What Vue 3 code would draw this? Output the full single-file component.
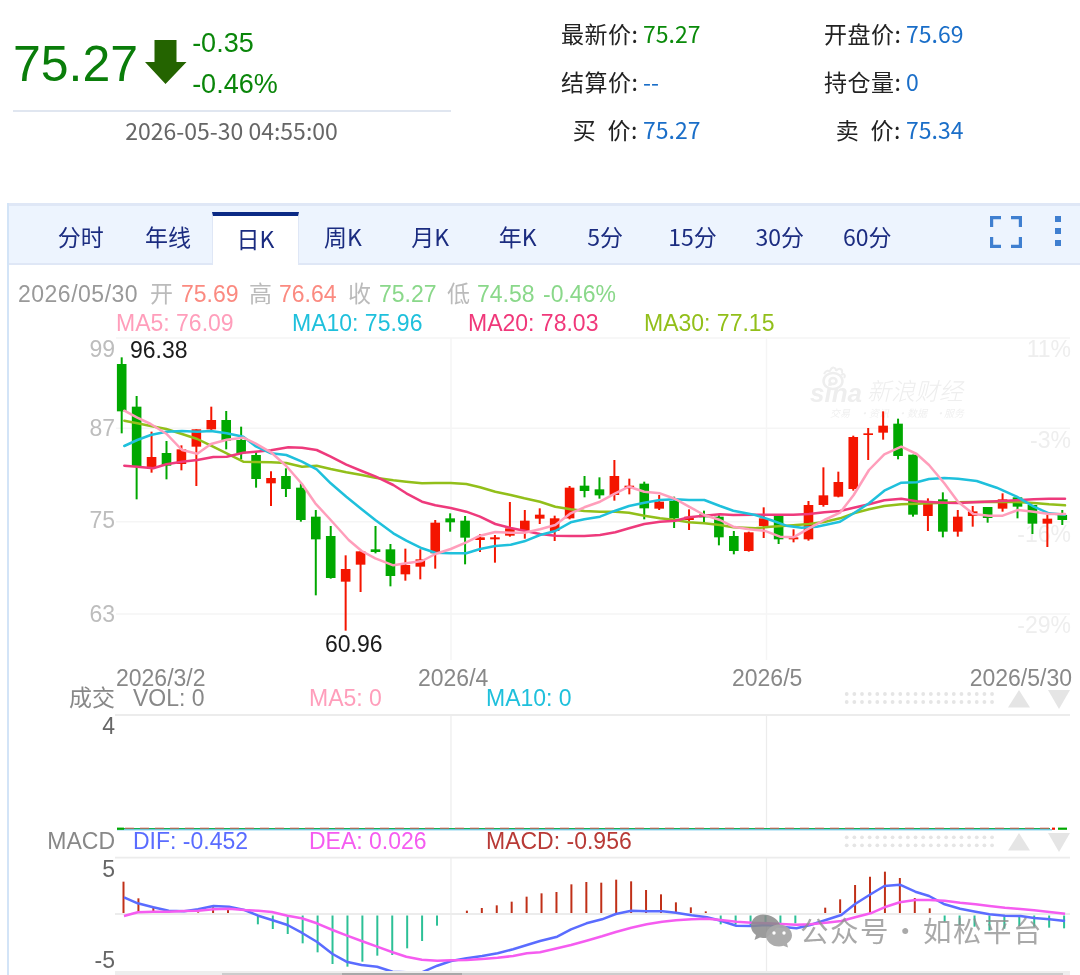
<script setup>
const tabs = ['分时', '年线', '日K', '周K', '月K', '年K', '5分', '15分', '30分', '60分']

const statRows = [
  [
    { label: '最新价:', value: '75.27', tone: 'down' },
    { label: '开盘价:', value: '75.69', tone: 'info' }
  ],
  [
    { label: '结算价:', value: '--', tone: 'info' },
    { label: '持仓量:', value: '0', tone: 'info' }
  ],
  [
    { label: '买\u00a0\u00a0价:', value: '75.27', tone: 'info' },
    { label: '卖\u00a0\u00a0价:', value: '75.34', tone: 'info' }
  ]
]

// [high, top, bottom, low, colour]; measured in 3x crop units, grouped by crop
const rawCandles = [
  [52, 72, 214, 280, 'g'], [168, 200, 378, 478, 'g'], [275, 351, 382, 398, 'r'], [303, 339, 377, 418, 'g'],
  [316, 328, 372, 391, 'r'], [268, 268, 320, 438, 'r'], [200, 240, 268, 272, 'r'], [213, 240, 302, 328, 'g'],
  [260, 300, 340, 358, 'g'], [335, 345, 417, 443, 'g'], [394, 414, 430, 498, 'r'], [385, 408, 447, 471, 'g'],
  [430, 443, 540, 545, 'g'], [510, 530, 598, 766, 'g'], [558, 588, 714, 716, 'g'], [646, 687, 725, 872, 'r'],
  [634, 634, 674, 756, 'r'], [558, 628, 636, 640, 'g'], [612, 628, 708, 739, 'g'], [626, 675, 703, 722, 'r'],
  [628, 658, 680, 718, 'r'], [540, 548, 640, 686, 'r']
].map((c) => [c, 340])
  .concat([
    [340, 355, 367, 395, 'g'], [348, 362, 413, 493, 'g'], [402, 412, 420, 456, 'r'], [405, 412, 418, 488, 'r'],
    [306, 385, 407, 410, 'r'], [330, 362, 392, 416, 'r'], [325, 344, 356, 372, 'r'], [347, 355, 393, 423, 'r'],
    [258, 263, 355, 358, 'r'], [228, 257, 273, 292, 'g'], [232, 268, 286, 296, 'g'], [180, 228, 285, 302, 'r'],
    [236, 257, 266, 283, 'r'], [245, 251, 325, 358, 'g'], [285, 305, 326, 330, 'r'], [290, 303, 355, 384, 'g'],
    [328, 350, 360, 390, 'r'], [332, 343, 352, 368, 'g'], [345, 350, 412, 436, 'g'], [393, 408, 453, 463, 'g']
  ].map((c) => [c, 400]))
  .concat([
    [575, 577, 633, 635, 'r'], [502, 535, 558, 594, 'r'], [528, 528, 598, 612, 'g'], [568, 592, 598, 607, 'r'],
    [483, 495, 598, 602, 'r'], [382, 466, 495, 500, 'r'], [395, 426, 470, 472, 'r'], [287, 291, 447, 452, 'r'],
    [264, 280, 285, 360, 'r'], [214, 257, 278, 299, 'r'], [236, 251, 348, 358, 'g'], [344, 344, 524, 530, 'g'],
    [475, 492, 528, 573, 'r'], [457, 478, 575, 592, 'g'], [510, 530, 575, 590, 'r'], [498, 514, 528, 560, 'r'],
    [501, 501, 534, 548, 'g'], [460, 478, 506, 515, 'r'], [472, 472, 500, 535, 'g'], [495, 495, 551, 582, 'g'],
    [525, 536, 551, 621, 'r'], [510, 525, 540, 555, 'g']
  ].map((c) => [c, 340]))

const candles = rawCandles.map(([c, off], i) => {
  const p = (v) => off + v / 3
  const top = p(c[1])
  return {
    x: 121.7 + 14.93 * i,
    hi: p(c[0]),
    lo: p(c[3]),
    top,
    h: Math.max(p(c[2]) - top, 1.5),
    cls: c[4] === 'g' ? 'candle-g' : 'candle-r'
  }
})

const pair = (flat, fx, fy) => {
  const out = []
  for (let i = 0; i < flat.length; i += 2) out.push([fx(flat[i]), fy(flat[i + 1])])
  return out
}
const toPoints = (list) => list.map((p) => p[0].toFixed(1) + ',' + p[1].toFixed(1)).join(' ')

const maLine = (a, b, c) => toPoints([
  ...pair(a, (v) => 100 + v / 3, (v) => 340 + v / 3).filter((p) => p[0] <= 428),
  ...pair(b, (v) => 420 + v / 3, (v) => 400 + v / 3).filter((p) => p[0] > 428 && p[0] <= 745),
  ...pair(c, (v) => 740 + v / 3, (v) => 340 + v / 3).filter((p) => p[0] > 745)
])

const maLines = [
  {
    cls: 'ma30',
    points: maLine(
      [73, 242, 112, 250, 152, 258, 199, 267, 246, 282, 292, 297, 333, 317, 380, 340, 430, 365, 466, 366, 513, 367, 559, 369, 606, 380, 650, 377, 692, 387, 739, 397, 785, 405, 826, 413, 880, 421, 919, 425, 966, 430, 1020, 429],
      [0, 250, 46, 249, 92, 249, 139, 252, 180, 262, 226, 275, 272, 285, 313, 295, 360, 305, 406, 320, 452, 328, 493, 333, 540, 335, 586, 335, 627, 338, 673, 347, 720, 355, 766, 360, 807, 367, 853, 370, 900, 375, 940, 382, 990, 385],
      [0, 563, 46, 565, 92, 560, 160, 556, 207, 552, 253, 546, 300, 535, 341, 520, 387, 508, 433, 498, 484, 493, 530, 491, 567, 490, 613, 488, 654, 487, 700, 486, 770, 485, 830, 486, 881, 489, 927, 493, 975, 496]
    )
  },
  {
    cls: 'ma20',
    points: maLine(
      [73, 377, 112, 380, 160, 385, 199, 373, 246, 365, 292, 360, 340, 351, 380, 350, 430, 338, 466, 335, 513, 331, 565, 322, 606, 323, 650, 330, 692, 350, 739, 374, 785, 393, 826, 409, 880, 435, 919, 460, 966, 485, 1020, 495],
      [0, 300, 46, 316, 92, 324, 139, 335, 180, 350, 226, 372, 272, 384, 313, 392, 360, 402, 406, 407, 452, 408, 493, 408, 540, 405, 586, 397, 627, 385, 673, 372, 720, 365, 766, 362, 807, 352, 853, 347, 900, 343, 940, 345, 990, 347],
      [0, 527, 46, 524, 92, 524, 160, 524, 207, 522, 253, 517, 300, 513, 341, 503, 387, 493, 433, 481, 484, 476, 530, 484, 567, 486, 613, 488, 654, 489, 700, 487, 770, 484, 830, 481, 881, 478, 927, 476, 975, 476]
    )
  },
  {
    cls: 'ma10',
    points: maLine(
      [73, 318, 112, 300, 152, 285, 199, 275, 246, 273, 292, 275, 333, 273, 380, 280, 430, 290, 466, 318, 513, 340, 559, 345, 606, 365, 650, 388, 692, 430, 739, 470, 785, 508, 826, 540, 880, 580, 919, 602, 966, 625, 1006, 637, 1020, 637],
      [0, 443, 46, 458, 92, 460, 139, 460, 180, 447, 226, 438, 272, 434, 313, 424, 360, 405, 406, 393, 452, 367, 493, 358, 540, 350, 586, 332, 627, 318, 673, 308, 720, 300, 766, 298, 807, 300, 853, 300, 900, 318, 940, 332, 990, 345],
      [0, 515, 46, 525, 92, 540, 139, 557, 185, 563, 230, 560, 300, 545, 341, 520, 387, 490, 433, 452, 484, 428, 530, 427, 567, 417, 613, 414, 654, 416, 710, 423, 770, 443, 830, 470, 881, 500, 927, 520, 975, 524]
    )
  },
  {
    cls: 'ma5',
    points: maLine(
      [73, 212, 112, 233, 152, 252, 199, 281, 246, 330, 292, 341, 333, 312, 380, 299, 430, 293, 466, 310, 513, 337, 559, 378, 606, 432, 646, 490, 692, 540, 746, 600, 785, 633, 826, 655, 880, 676, 919, 670, 966, 663, 1006, 650, 1020, 642],
      [0, 482, 46, 462, 92, 447, 139, 427, 180, 407, 226, 396, 272, 398, 313, 398, 360, 388, 406, 375, 452, 340, 493, 322, 540, 305, 586, 280, 627, 260, 673, 275, 720, 280, 766, 297, 807, 320, 853, 345, 900, 360, 940, 380, 990, 392],
      [0, 565, 27, 568, 73, 572, 120, 590, 160, 592, 207, 565, 253, 540, 300, 518, 341, 465, 387, 390, 433, 343, 484, 320, 530, 342, 567, 375, 613, 430, 654, 485, 700, 522, 747, 527, 788, 527, 834, 510, 881, 515, 927, 522, 975, 522]
    )
  }
]

const macdLine = (a, b) => toPoints([
  ...pair(a, (v) => v / 2.904, (v) => 660 + v / 3),
  ...pair(b, (v) => 540 + v / 2.904, (v) => 660 + v / 3)
])

const difPoints = macdLine(
  [360, 712, 400, 730, 445, 742, 490, 752, 535, 754, 575, 748, 620, 738, 665, 740, 710, 750, 750, 767, 790, 780, 835, 795, 876, 818, 920, 845, 966, 882, 1006, 905, 1050, 915, 1095, 920, 1140, 935, 1180, 937, 1225, 937, 1270, 917, 1310, 903, 1355, 895, 1400, 888, 1445, 880, 1490, 868, 1530, 855],
  [0, 843, 50, 830, 90, 808, 135, 790, 180, 778, 220, 762, 265, 752, 310, 754, 355, 754, 395, 758, 440, 766, 485, 772, 525, 782, 570, 797, 615, 798, 660, 795, 700, 800, 745, 805, 785, 795, 830, 780, 875, 765, 915, 732, 960, 703, 1000, 678, 1045, 674, 1090, 695, 1130, 708, 1175, 733, 1220, 746, 1265, 755, 1305, 763, 1350, 767, 1395, 768, 1435, 774, 1480, 778, 1525, 783]
)
const deaPoints = macdLine(
  [360, 768, 400, 757, 445, 755, 490, 755, 535, 753, 575, 752, 620, 748, 665, 746, 710, 750, 750, 752, 790, 756, 835, 767, 876, 775, 920, 790, 966, 810, 1006, 826, 1050, 843, 1095, 860, 1140, 877, 1180, 890, 1225, 899, 1270, 902, 1310, 901, 1355, 900, 1400, 897, 1445, 893, 1490, 888, 1530, 880],
  [0, 877, 50, 865, 90, 855, 135, 842, 180, 829, 220, 816, 265, 803, 310, 793, 355, 785, 395, 781, 440, 778, 485, 776, 525, 780, 570, 785, 615, 788, 660, 790, 700, 792, 745, 794, 785, 793, 830, 788, 875, 783, 915, 772, 960, 760, 1000, 742, 1045, 727, 1090, 720, 1130, 720, 1175, 722, 1220, 728, 1265, 733, 1305, 738, 1350, 743, 1395, 747, 1435, 751, 1480, 756, 1525, 761]
)

// candle index -> bar end (crop units below the top of the crop)
const macdEnds = {
  0: 665, 1: 715, 2: 740, 3: 755, 5: 757, 6: 742, 7: 750,
  9: 793, 10: 807, 11: 822, 12: 850, 13: 877, 14: 912, 15: 920, 16: 905, 17: 887, 18: 885, 19: 865, 20: 843, 21: 797,
  23: 752, 24: 744, 25: 736, 26: 725, 27: 710, 28: 700, 29: 696, 30: 673, 31: 666, 32: 668, 33: 659, 34: 664, 35: 690, 36: 703, 37: 727, 38: 742, 39: 754,
  40: 793, 41: 793, 42: 795, 43: 795, 44: 790, 45: 790,
  47: 743, 48: 718, 49: 675, 50: 650, 51: 635, 52: 654, 53: 714, 54: 745,
  55: 785, 56: 795, 57: 800, 58: 812, 59: 806, 60: 798, 61: 800, 62: 803, 63: 805
}
const macdBars = Object.keys(macdEnds).map((k) => {
  const i = Number(k)
  const end = 660 + macdEnds[k] / 3
  const up = end < 914
  return {
    x: 123.5 + 14.93 * i,
    y1: up ? 913 : 915.5,
    y2: end,
    cls: up ? 'bar-up' : 'bar-down'
  }
})

const dotColumns = Array.from({ length: 20 }, (_, i) => 846.7 + 7.65 * i)
const dotRows = [694, 702, 837.3, 845.3]

const hGrid = [338, 428.3, 521.7, 614]
const vGrid = [451, 766.5]
const panelLines = [715, 857.7, 914]

const priceLabels = [
  { y: 357, t: '99' },
  { y: 436, t: '87' },
  { y: 528, t: '75' },
  { y: 622, t: '63' }
]
const pctLabels = [
  { y: 357, t: '11%' },
  { y: 448, t: '-3%' },
  { y: 542, t: '-16%' },
  { y: 633, t: '-29%' }
]
const legend = [
  { x: 18, t: '2026/05/30', cls: 'lg-date' },
  { x: 150, t: '开', cls: 'lg-key' },
  { x: 181, t: '75.69', cls: 'lg-up' },
  { x: 249, t: '高', cls: 'lg-key' },
  { x: 279, t: '76.64', cls: 'lg-up' },
  { x: 348, t: '收', cls: 'lg-key' },
  { x: 379, t: '75.27', cls: 'lg-down' },
  { x: 447, t: '低', cls: 'lg-key' },
  { x: 477, t: '74.58', cls: 'lg-down' },
  { x: 543, t: '-0.46%', cls: 'lg-down' }
]
const maLegend = [
  { x: 116, t: 'MA5: 76.09', cls: 'c-ma5' },
  { x: 292, t: 'MA10: 75.96', cls: 'c-ma10' },
  { x: 468, t: 'MA20: 78.03', cls: 'c-ma20' },
  { x: 644, t: 'MA30: 77.15', cls: 'c-ma30' }
]
</script>

<template>
  <div class="page">
    <header class="head">
      <div class="quote">
        <div class="price-row">
          <span class="price">75.27</span>
          <svg class="arrow" width="42" height="44" viewBox="0 0 42 44">
            <path d="M9.5 0H31.5V22H41.5L20.5 44L0 22H9.5Z" />
          </svg>
          <div class="change">
            <span>-0.35</span>
            <span>-0.46%</span>
          </div>
        </div>
        <div class="stamp">2026-05-30 04:55:00</div>
      </div>
      <div class="stats">
        <div v-for="(row, r) in statRows" :key="r" class="stat-row">
          <div v-for="item in row" :key="item.label" class="stat">
            <span class="stat-label">{{ item.label }}</span>
            <span :class="['stat-value', item.tone]">{{ item.value }}</span>
          </div>
        </div>
      </div>
    </header>

    <section class="panel">
      <nav class="tabs">
        <div class="tab-list">
          <span v-for="t in tabs" :key="t" :class="['tab', { active: t === '日K' }]">{{ t }}</span>
        </div>
        <svg class="fs-icon" width="32" height="32" viewBox="0 0 32 32">
          <path d="M1.5 11V1.5H11M21 1.5H30.5V11M30.5 21V30.5H21M11 30.5H1.5V21" />
        </svg>
        <div class="more">
          <i></i><i></i><i></i>
        </div>
      </nav>

      <svg class="chart" width="1071" height="710" viewBox="9 265 1071 710">
        <!-- grid -->
        <line v-for="y in hGrid" :key="'h' + y" class="grid" x1="116" x2="1070" :y1="y" :y2="y" />
        <line v-for="x in vGrid" :key="'v' + x" class="grid" :x1="x" :x2="x" y1="338" y2="660" />
        <line v-for="x in vGrid" :key="'w' + x" class="grid-dark" :x1="x" :x2="x" y1="715" y2="829" />
        <line v-for="x in vGrid" :key="'z' + x" class="grid-dark" :x1="x" :x2="x" y1="858" y2="971" />
        <line v-for="y in panelLines" :key="'p' + y" class="grid-dark thick" x1="115" x2="1070" :y1="y" :y2="y" />

        <!-- sina watermark -->
        <g class="sina">
          <ellipse class="sina-eye" cx="833" cy="381" rx="9.5" ry="8" />
          <ellipse class="sina-eye" cx="833" cy="381" rx="3.5" ry="3" />
          <path class="sina-hair" d="M824 374C826 370 829 370 830 372M830 371C832 366 836 367 836 371M836 371C839 367 843 369 842 373M841 375C844 373 846 375 844 378" />
          <text class="sina-word" x="810" y="402">sina</text>
          <text class="sina-cn" x="867" y="400">新浪财经</text>
          <text class="sina-sub" x="830" y="417">交易</text>
          <text class="sina-sub" x="859" y="417">·</text>
          <text class="sina-sub" x="869" y="417">资讯</text>
          <text class="sina-sub" x="897" y="417">·</text>
          <text class="sina-sub" x="907" y="417">数据</text>
          <text class="sina-sub" x="935" y="417">·</text>
          <text class="sina-sub" x="944" y="417">服务</text>
        </g>

        <text v-for="l in pctLabels" :key="l.t" class="pct" x="1071" :y="l.y">{{ l.t }}</text>
        <text v-for="l in priceLabels" :key="l.t" class="price-axis" x="115" :y="l.y">{{ l.t }}</text>

        <!-- candles -->
        <g v-for="(c, i) in candles" :key="i" :class="c.cls">
          <line :x1="c.x" :x2="c.x" :y1="c.hi" :y2="c.lo" class="wick" />
          <rect :x="c.x - 4.8" :y="c.top" width="9.6" :height="c.h" class="body" />
        </g>
        <polyline v-for="m in maLines" :key="m.cls" :class="['ma', m.cls]" :points="m.points" />

        <text class="mark" x="130" y="358">96.38</text>
        <text class="mark" x="325" y="652">60.96</text>

        <!-- legends -->
        <text v-for="l in legend" :key="l.x" :class="['label', l.cls]" :x="l.x" y="302">{{ l.t }}</text>
        <text v-for="l in maLegend" :key="l.x" :class="['label', l.cls]" :x="l.x" y="331">{{ l.t }}</text>

        <!-- date axis -->
        <text class="label axis" x="116" y="686">2026/3/2</text>
        <text class="label axis" x="418" y="686">2026/4</text>
        <text class="label axis" x="732" y="686">2026/5</text>
        <text class="label axis end" x="1072" y="686">2026/5/30</text>

        <!-- volume -->
        <text class="label axis end" x="115" y="706">成交</text>
        <text class="label axis" x="133" y="706">VOL: 0</text>
        <text class="label c-ma5" x="309" y="706">MA5: 0</text>
        <text class="label c-ma10" x="486" y="706">MA10: 0</text>
        <text class="tick" x="115" y="734">4</text>
        <line class="vol-green" x1="117" x2="1050" y1="828.6" y2="828.6" />
        <line class="vol-dash" x1="125" x2="1052" y1="828.2" y2="828.2" />
        <line class="vol-cyan" x1="117" x2="1052" y1="829.8" y2="829.8" />
        <rect class="vol-end-r" x="1052" y="827.6" width="3" height="2.2" />
        <rect class="vol-end-g" x="1058" y="827.6" width="9" height="2.2" />
        <rect class="vol-end-g" x="117" y="827.6" width="7" height="2.2" />

        <!-- macd -->
        <text class="label axis end" x="115" y="849">MACD</text>
        <text class="label c-dif" x="133" y="849">DIF: -0.452</text>
        <text class="label c-dea" x="309" y="849">DEA: 0.026</text>
        <text class="label c-macd" x="486" y="849">MACD: -0.956</text>
        <text class="tick" x="115" y="877">5</text>
        <text class="tick" x="115" y="968">-5</text>

        <line v-for="b in macdBars" :key="b.x" :class="b.cls" :x1="b.x" :x2="b.x" :y1="b.y1" :y2="b.y2" />
        <polyline class="macd-line dif" :points="difPoints" />
        <polyline class="macd-line dea" :points="deaPoints" />

        <!-- controls -->
        <g class="ctrl">
          <template v-for="y in dotRows" :key="y">
            <circle v-for="x in dotColumns" :key="x" :cx="x" :cy="y" r="1.9" />
          </template>
          <path d="M1019 690L1030 707.5H1008Z" />
          <path d="M1048 690H1070L1059 709Z" />
          <path d="M1019 833L1030 850.5H1008Z" />
          <path d="M1048 833H1070L1059 852Z" />
        </g>

        <!-- scrollbar -->
        <rect class="scroll-track" x="115" y="971" width="955" height="4" />
        <rect class="scroll-mid" x="222" y="973" width="841" height="2" />
        <rect class="scroll-thumb" x="342" y="973" width="120" height="2" />

        <!-- channel watermark -->
        <g class="wx">
          <path class="wx-back" d="M763 914.5C755.5 914.5 751 920 751 926C751 930 753 933 756 935L754.5 940L760 937.5C762 938 764 938 766 938L780 925C778 919 771 914.5 763 914.5Z" />
          <path class="wx-front" d="M779 924.5C771.5 924.5 766 929.5 766 935.5C766 941.5 771.5 946.5 779 946.5C780.5 946.5 782 946.3 783.5 945.8L788 947.5L787 943.5C790 941.5 792 938.7 792 935.5C792 929.5 786.5 924.5 779 924.5Z" />
          <circle class="wx-eye" cx="774" cy="933" r="1.7" />
          <circle class="wx-eye" cx="784" cy="933" r="1.7" />
          <text class="wx-text" x="800" y="942">公众号</text>
          <text class="wx-text" x="891" y="942">·</text>
          <text class="wx-text" x="923" y="942">如松平台</text>
        </g>
      </svg>
    </section>
  </div>
</template>

<style>
html, body { margin: 0; background: #fff; }
</style>

<style scoped>
.page {
  width: 1080px;
  height: 975px;
  overflow: hidden;
  background: #fff;
  font-family: "Liberation Sans", "Noto Sans CJK SC", sans-serif;
  filter: blur(0.35px);
}

.head {
  display: flex;
  height: 203px;
  box-sizing: border-box;
}
.quote {
  flex: none;
  width: 438px;
  margin-left: 13px;
}
.price-row {
  display: flex;
  align-items: flex-start;
  height: 110px;
  border-bottom: 2px solid #e0e6f0;
  color: #0a7d0a;
}
.price {
  font-size: 50px;
  line-height: 56px;
  margin-top: 36px;
}
.arrow {
  margin: 40px 0 0 7px;
  flex: none;
}
.arrow path { fill: #246400; }
.change {
  display: flex;
  flex-direction: column;
  margin: 23px 0 0 5px;
  font-size: 27px;
  line-height: 40.5px;
  color: #0a860a;
}
.stamp {
  text-align: center;
  margin-top: 2px;
  margin-right: 1px;
  font-family: "Noto Sans CJK SC", sans-serif;
  font-size: 23px;
  line-height: 32px;
  color: #666;
}
.stats {
  flex: none;
  margin-left: 110px;
  padding-top: 9px;
  font-family: "Noto Sans CJK SC", sans-serif;
  font-size: 23px;
  color: #222;
}
.stat-row {
  display: flex;
  height: 48px;
  align-items: center;
}
.stat {
  display: flex;
  width: 263px;
  gap: 5px;
}
.stat-label {
  width: 77px;
  text-align: right;
  white-space: nowrap;
  letter-spacing: 0.5px;
}
.down { color: #0a8a0a; }
.info { color: #1a6ec8; }

.panel {
  margin-left: 7px;
  border-left: 2px solid #d3e4f7;
  box-sizing: border-box;
}
.tabs {
  position: relative;
  display: flex;
  align-items: flex-end;
  height: 62px;
  box-sizing: border-box;
  padding-left: 28px;
  background: #edf4fe;
  border-top: 3px solid #dfe7f6;
  border-bottom: 2px solid #dfe7f6;
}
.tab-list {
  display: flex;
  margin-bottom: -2px;
}
.tab {
  width: 87.4px;
  height: 53px;
  box-sizing: border-box;
  padding-top: 7px;
  text-align: center;
  font-family: "Noto Sans CJK SC", sans-serif;
  font-size: 23px;
  line-height: 34px;
  color: #1b2c80;
  white-space: nowrap;
}
.tab.active {
  background: #fff;
  border-top: 4px solid #0b2a85;
  border-left: 1px solid #dfe7f6;
  border-right: 1px solid #dfe7f6;
  padding-top: 5px;
}
.fs-icon {
  position: absolute;
  left: 981px;
  top: 10px;
  fill: none;
  stroke: #3f7fd0;
  stroke-width: 3.4;
}
.more {
  position: absolute;
  left: 1046px;
  top: 10px;
  display: flex;
  flex-direction: column;
  gap: 6px;
}
.more i {
  display: block;
  width: 6px;
  height: 6px;
  background: #3f7fd0;
}

.chart {
  display: block;
  font-family: "Liberation Sans", "Noto Sans CJK SC", sans-serif;
}
.grid { stroke: #f5f5f5; stroke-width: 1.5; }
.grid-dark { stroke: #ececec; stroke-width: 1.2; }
.thick { stroke-width: 1.8; }

.label { font-size: 23px; }
.end { text-anchor: end; }
.axis { fill: #888; }
.lg-date { fill: #999; letter-spacing: 0.5px; }
.lg-key { fill: #bbb; }
.lg-up { fill: #fb8a80; }
.lg-down { fill: #8ad88a; }
.c-ma5 { fill: #ff9ebb; }
.c-ma10 { fill: #1fc0dc; }
.c-ma20 { fill: #f0387a; }
.c-ma30 { fill: #92bf1a; }
.c-dif { fill: #5a6cff; }
.c-dea { fill: #f55cf0; }
.c-macd { fill: #b83a36; }

.price-axis { font-size: 23px; fill: #bdbdbd; text-anchor: end; }
.pct { font-size: 23px; fill: #eeeeee; text-anchor: end; }
.tick { font-size: 23px; fill: #666; text-anchor: end; }
.mark { font-size: 23px; fill: #1a1a1a; }

.wick { stroke-width: 2; }
.candle-g .wick { stroke: #00a800; }
.candle-g .body { fill: #00a800; }
.candle-r .wick { stroke: #f41500; }
.candle-r .body { fill: #f41500; }

.ma {
  fill: none;
  stroke-width: 2.5;
  stroke-linejoin: round;
  stroke-linecap: round;
}
.ma5 { stroke: #ff9ebb; }
.ma10 { stroke: #1fc0dc; }
.ma20 { stroke: #ee3a7c; }
.ma30 { stroke: #92bf1a; }

.bar-up { stroke: #c03018; stroke-width: 2; }
.bar-down { stroke: #2cc096; stroke-width: 2; }
.macd-line {
  fill: none;
  stroke-width: 2.5;
  stroke-linejoin: round;
}
.dif { stroke: #5a6cff; }
.dea { stroke: #f55cf0; }

.vol-green { stroke: #14b050; stroke-width: 1.2; }
.vol-dash { stroke: #d85a5a; stroke-width: 1; stroke-dasharray: 9 6; }
.vol-cyan { stroke: #4db8e0; stroke-width: 1; }
.vol-end-r { fill: #f41500; }
.vol-end-g { fill: #00a800; }

.ctrl { fill: #e5e5e5; }

.scroll-track { fill: #eeeeee; }
.scroll-mid { fill: #cccccc; }
.scroll-thumb { fill: #a8a8a8; }

.sina { fill: #eeeeee; }
.sina-eye { fill: none; stroke: #eeeeee; stroke-width: 2.5; }
.sina-hair { fill: none; stroke: #eeeeee; stroke-width: 2; }
.sina-word { font-size: 26px; font-weight: 700; font-style: italic; }
.sina-cn { font-family: "Noto Sans CJK SC", sans-serif; font-size: 24px; font-style: italic; font-weight: 300; }
.sina-sub { font-family: "Noto Sans CJK SC", sans-serif; font-size: 10px; font-style: italic; fill: #f0f0f0; }

.wx-back { fill: #8a8a8a; opacity: 0.85; }
.wx-front { fill: #a8a8a8; opacity: 0.95; }
.wx-eye { fill: #ffffff; }
.wx-text {
  font-family: "Noto Sans CJK SC", sans-serif;
  font-size: 28.5px;
  letter-spacing: 1.5px;
  fill: #8c8c8c;
  fill-opacity: 0.75;
}
</style>
